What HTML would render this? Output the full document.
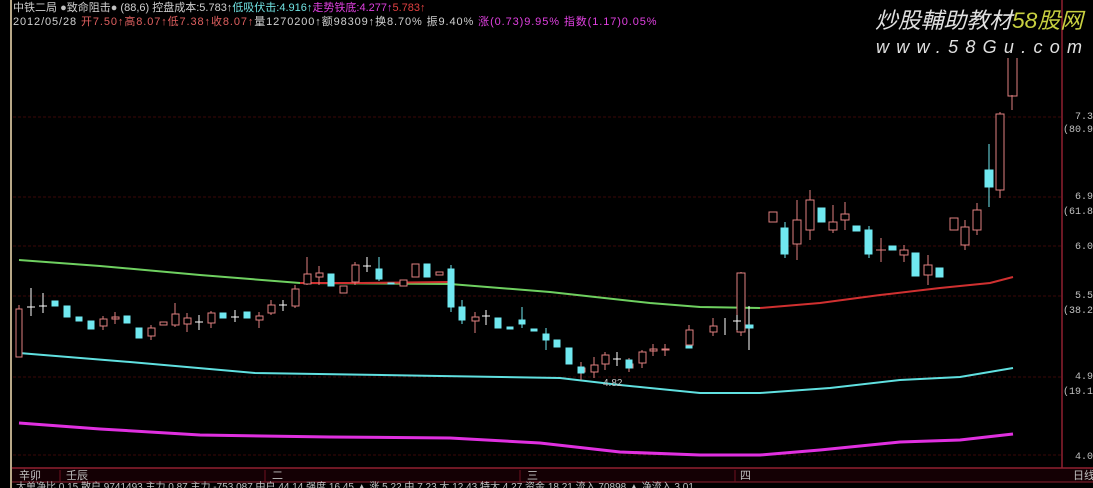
<!DOCTYPE html>
<html><head><meta charset="utf-8"><style>
html,body{margin:0;padding:0;background:#000;}
body{width:1093px;height:488px;overflow:hidden;position:relative;font-family:"Liberation Sans","Noto Sans CJK SC",sans-serif;}
.t{position:absolute;font-size:11px;white-space:nowrap;line-height:12px;}
</style></head><body>
<svg width="1093" height="488" style="position:absolute;left:0;top:0" xmlns="http://www.w3.org/2000/svg">
<rect width="1093" height="488" fill="#000"/>
<line x1="11" y1="0" x2="11" y2="488" stroke="#b8a888" stroke-width="2"/>
<g stroke="#3a0808" stroke-width="1" stroke-dasharray="3,2">
<line x1="13" y1="117" x2="1062" y2="117"/><line x1="13" y1="197" x2="1062" y2="197"/>
<line x1="13" y1="246" x2="1062" y2="246"/><line x1="13" y1="296" x2="1062" y2="296"/>
<line x1="13" y1="377" x2="1062" y2="377"/><line x1="13" y1="455" x2="1062" y2="455"/>
</g>
<line x1="1062" y1="0" x2="1062" y2="470" stroke="#902030" stroke-width="1.5"/>
<rect x="12" y="468" width="1081" height="14" fill="#140004"/>
<line x1="12" y1="468" x2="1093" y2="468" stroke="#902030" stroke-width="1.5"/>
<line x1="12" y1="482" x2="1093" y2="482" stroke="#902030" stroke-width="1"/>
<polyline fill="none" stroke="#6fd060" stroke-width="2" points="19,260 100,266 200,275 300,283 450,284 550,292 650,303 700,307 760,308"/>
<polyline fill="none" stroke="#d03030" stroke-width="2" points="300,283 360,283 450,282"/>
<polyline fill="none" stroke="#d03030" stroke-width="2" points="760,308 820,303 880,295 940,288 990,283 1013,277"/>
<polyline fill="none" stroke="#60e0e0" stroke-width="2" points="19,353 130,362 255,373 440,376 560,378 620,385 700,393 760,393 830,388 900,380 960,377 1013,368"/>
<polyline fill="none" stroke="#e030e0" stroke-width="3" points="19,423 100,429 200,435 330,437 450,438 540,443 620,452 700,455 760,455 820,450 900,442 960,440 1013,434"/>
<g stroke-width="1">
<g stroke="#e08080" fill="none">
<line x1="19" y1="305" x2="19" y2="357"/><rect x="16" y="309" width="6" height="48" fill="#000"/>
<line x1="103" y1="316" x2="103" y2="330"/><rect x="100" y="319" width="7" height="7" fill="#000"/>
<line x1="115" y1="312" x2="115" y2="324"/><rect x="112" y="317" width="7" height="2"/>
<line x1="151" y1="325" x2="151" y2="340"/><rect x="148" y="328" width="7" height="8" fill="#000"/>
<rect x="160" y="322" width="7" height="3"/>
<line x1="175" y1="303" x2="175" y2="327"/><rect x="172" y="314" width="7" height="11" fill="#000"/>
<line x1="187" y1="313" x2="187" y2="332"/><rect x="184" y="318" width="7" height="6" fill="#000"/>
<line x1="211" y1="311" x2="211" y2="328"/><rect x="208" y="313" width="7" height="10" fill="#000"/>
<line x1="259" y1="312" x2="259" y2="328"/><rect x="256" y="316" width="7" height="4" fill="#000"/>
<line x1="271" y1="300" x2="271" y2="315"/><rect x="268" y="305" width="7" height="8" fill="#000"/>
<line x1="295" y1="285" x2="295" y2="308"/><rect x="292" y="289" width="7" height="17" fill="#000"/>
<line x1="307" y1="257" x2="307" y2="285"/><rect x="304" y="274" width="7" height="10" fill="#000"/>
<line x1="319" y1="266" x2="319" y2="285"/><rect x="316" y="273" width="7" height="4" fill="#000"/>
<rect x="340" y="286" width="7" height="7" fill="#000"/>
<line x1="355" y1="262" x2="355" y2="285"/><rect x="352" y="265" width="7" height="17" fill="#000"/>
<rect x="400" y="280" width="7" height="6" fill="#000"/>
<rect x="412" y="264" width="7" height="13" fill="#000"/>
<rect x="436" y="272" width="7" height="3" fill="#000"/>
<line x1="475" y1="312" x2="475" y2="333"/><rect x="472" y="317" width="7" height="4" fill="#000"/>
<line x1="581" y1="362" x2="581" y2="380"/><rect x="578" y="368" width="7" height="4" fill="#000"/>
<line x1="594" y1="357" x2="594" y2="378"/><rect x="591" y="365" width="7" height="7" fill="#000"/>
<line x1="605" y1="352" x2="605" y2="370"/><rect x="602" y="355" width="7" height="9" fill="#000"/>
<line x1="629" y1="358" x2="629" y2="372"/><rect x="626" y="364" width="7" height="4" fill="#000"/>
<line x1="642" y1="350" x2="642" y2="368"/><rect x="639" y="352" width="7" height="11" fill="#000"/>
<line x1="653" y1="344" x2="653" y2="356"/><rect x="650" y="349" width="7" height="2"/>
<line x1="665" y1="344" x2="665" y2="356"/><rect x="662" y="349" width="7" height="1"/>
<line x1="689" y1="325" x2="689" y2="348"/><rect x="686" y="330" width="7" height="15" fill="#000"/>
<line x1="713" y1="318" x2="713" y2="336"/><rect x="710" y="326" width="7" height="6" fill="#000"/>
<line x1="741" y1="272" x2="741" y2="336"/><rect x="737" y="273" width="8" height="59" fill="#000"/>
<rect x="769" y="212" width="8" height="10" fill="#000"/>
<line x1="797" y1="200" x2="797" y2="260"/><rect x="793" y="220" width="8" height="24" fill="#000"/>
<line x1="810" y1="190" x2="810" y2="240"/><rect x="806" y="200" width="8" height="30" fill="#000"/>
<line x1="833" y1="205" x2="833" y2="233"/><rect x="829" y="222" width="8" height="8" fill="#000"/>
<line x1="845" y1="202" x2="845" y2="230"/><rect x="841" y="214" width="8" height="6" fill="#000"/>
<line x1="881" y1="238" x2="881" y2="262"/><line x1="876" y1="250" x2="886" y2="250"/>
<line x1="904" y1="245" x2="904" y2="262"/><rect x="900" y="250" width="8" height="5" fill="#000"/>
<line x1="928" y1="255" x2="928" y2="285"/><rect x="924" y="265" width="8" height="10" fill="#000"/>
<rect x="950" y="218" width="8" height="12" fill="#000"/>
<line x1="965" y1="220" x2="965" y2="250"/><rect x="961" y="227" width="8" height="18" fill="#000"/>
<line x1="977" y1="203" x2="977" y2="235"/><rect x="973" y="210" width="8" height="20" fill="#000"/>
<line x1="1000" y1="112" x2="1000" y2="198"/><rect x="996" y="114" width="8" height="76" fill="#000"/>
<line x1="1012" y1="95" x2="1012" y2="110"/><path d="M1008 58 V96 H1017 V58"/>
</g>
<g stroke="#ffffff">
<line x1="31" y1="288" x2="31" y2="316"/><line x1="27" y1="307" x2="35" y2="307"/>
<line x1="43" y1="293" x2="43" y2="313"/><line x1="39" y1="306" x2="47" y2="306"/>
<line x1="199" y1="315" x2="199" y2="330"/><line x1="195" y1="322" x2="203" y2="322"/>
<line x1="235" y1="310" x2="235" y2="322"/><line x1="231" y1="317" x2="239" y2="317"/>
<line x1="283" y1="300" x2="283" y2="311"/><line x1="279" y1="305" x2="287" y2="305"/>
<line x1="367" y1="257" x2="367" y2="272"/><line x1="363" y1="266" x2="371" y2="266"/>
<line x1="486" y1="310" x2="486" y2="325"/><line x1="482" y1="316" x2="490" y2="316"/>
<line x1="617" y1="352" x2="617" y2="366"/><line x1="613" y1="359" x2="621" y2="359"/>
<line x1="725" y1="318" x2="725" y2="335"/>
<line x1="737" y1="315" x2="737" y2="330"/><line x1="733" y1="321" x2="741" y2="321"/>
<line x1="749" y1="306" x2="749" y2="350"/>
</g>
<g fill="#70e8f0" stroke="#70e8f0">
<rect x="52" y="301" width="6" height="5"/><rect x="64" y="306" width="6" height="11"/>
<rect x="76" y="317" width="6" height="4"/><rect x="88" y="321" width="6" height="8"/>
<rect x="124" y="316" width="6" height="7"/><rect x="136" y="328" width="6" height="10"/>
<rect x="220" y="313" width="6" height="5"/><rect x="244" y="312" width="6" height="6"/>
<rect x="328" y="274" width="6" height="12"/><rect x="376" y="269" width="6" height="10"/>
<line x1="379" y1="257" x2="379" y2="281"/><rect x="388" y="283" width="6" height="1"/>
<rect x="424" y="264" width="6" height="13"/><rect x="448" y="269" width="6" height="38"/>
<line x1="451" y1="265" x2="451" y2="312"/>
<rect x="459" y="307" width="6" height="13"/><line x1="462" y1="300" x2="462" y2="324"/>
<rect x="495" y="318" width="6" height="10"/><rect x="507" y="327" width="6" height="2"/>
<rect x="519" y="320" width="6" height="4"/><line x1="522" y1="307" x2="522" y2="328"/>
<rect x="531" y="329" width="6" height="2"/><rect x="543" y="334" width="6" height="6"/>
<line x1="546" y1="328" x2="546" y2="350"/><rect x="554" y="340" width="6" height="7"/>
<rect x="566" y="348" width="6" height="16"/><rect x="578" y="367" width="6" height="6"/>
<rect x="626" y="360" width="6" height="8"/><rect x="686" y="346" width="6" height="2"/>
<rect x="746" y="325" width="7" height="3"/>
<rect x="781" y="228" width="7" height="26"/><line x1="785" y1="222" x2="785" y2="258"/>
<rect x="818" y="208" width="7" height="14"/><rect x="853" y="226" width="7" height="5"/>
<rect x="865" y="230" width="7" height="24"/><line x1="869" y1="226" x2="869" y2="258"/>
<rect x="889" y="246" width="7" height="4"/><rect x="912" y="253" width="7" height="23"/>
<rect x="936" y="268" width="7" height="9"/>
<rect x="985" y="170" width="8" height="17"/><line x1="989" y1="144" x2="989" y2="207"/>
</g>
</g>
<text x="603" y="386" fill="#c0c0c0" font-size="10" font-family="Liberation Sans">4.82</text>
<g font-family="Liberation Mono, monospace" font-size="10" fill="#c0c0c0">
<text x="1075" y="119">7.3</text><text x="1063" y="132">(80.9</text>
<text x="1075" y="199">6.9</text><text x="1063" y="214">(61.8</text>
<text x="1075" y="249">6.0</text>
<text x="1075" y="298">5.5</text><text x="1063" y="313">(38.2</text>
<text x="1075" y="379">4.9</text><text x="1063" y="394">(19.1</text>
<text x="1075" y="459">4.0</text>
</g>
<g font-family="Liberation Sans, Noto Sans CJK SC, sans-serif" font-size="11" fill="#c0c0c0">
<text x="19" y="479">辛卯</text><text x="66" y="479">壬辰</text>
<text x="272" y="479">二</text><text x="527" y="479">三</text><text x="740" y="479">四</text>
<text x="1073" y="479">日线</text>
</g>
<g stroke="#701020"><line x1="60" y1="470" x2="60" y2="482"/><line x1="265" y1="470" x2="265" y2="482"/><line x1="520" y1="470" x2="520" y2="482"/><line x1="735" y1="470" x2="735" y2="482"/></g>
<text x="16" y="490" fill="#c0c0c0" font-size="10" font-family="Liberation Sans, Noto Sans CJK SC, sans-serif">大单净比 0.15  散户 9741493  主力 0.87  主力 -753.087  中户 44.14 强度 16.45  ▲ 涨 5.22  中 7.23  大 12.43  特大 4.27  资金 18.21  流入 70898  ▲ 净流入 3.01</text>
<g font-family="Liberation Sans, Noto Sans CJK SC, sans-serif" font-style="italic">
<text x="875" y="28" fill="#e0e0e0" font-size="22" textLength="208" lengthAdjust="spacingAndGlyphs">炒股輔助教材<tspan fill="#c8d040">58股网</tspan></text>
<text x="876" y="53" fill="#e0e0e0" font-size="18" textLength="206" lengthAdjust="spacing">www.58Gu.com</text>
</g>
</svg>
<div class="t" style="left:13px;top:2px;color:#d0d0d0">中铁二局 <span style="color:#c0c0c0">●</span>致命阻击<span style="color:#c0c0c0">●</span> (88,6) 控盘成本:5.783↑<span style="color:#70e0e0">低吸伏击:4.916↑</span><span style="color:#e040e0">走势铁底:4.277↑</span><span style="color:#e04040">5.783↑</span></div>
<div class="t" style="left:13px;top:16px;color:#d0d0d0;letter-spacing:0.9px">2012/05/28 <span style="color:#e06060">开7.50↑高8.07↑低7.38↑收8.07↑</span>量1270200↑额98309↑换8.70% 振9.40% <span style="color:#e040e0">涨(0.73)9.95% 指数(1.17)0.05%</span></div>
</body></html>
